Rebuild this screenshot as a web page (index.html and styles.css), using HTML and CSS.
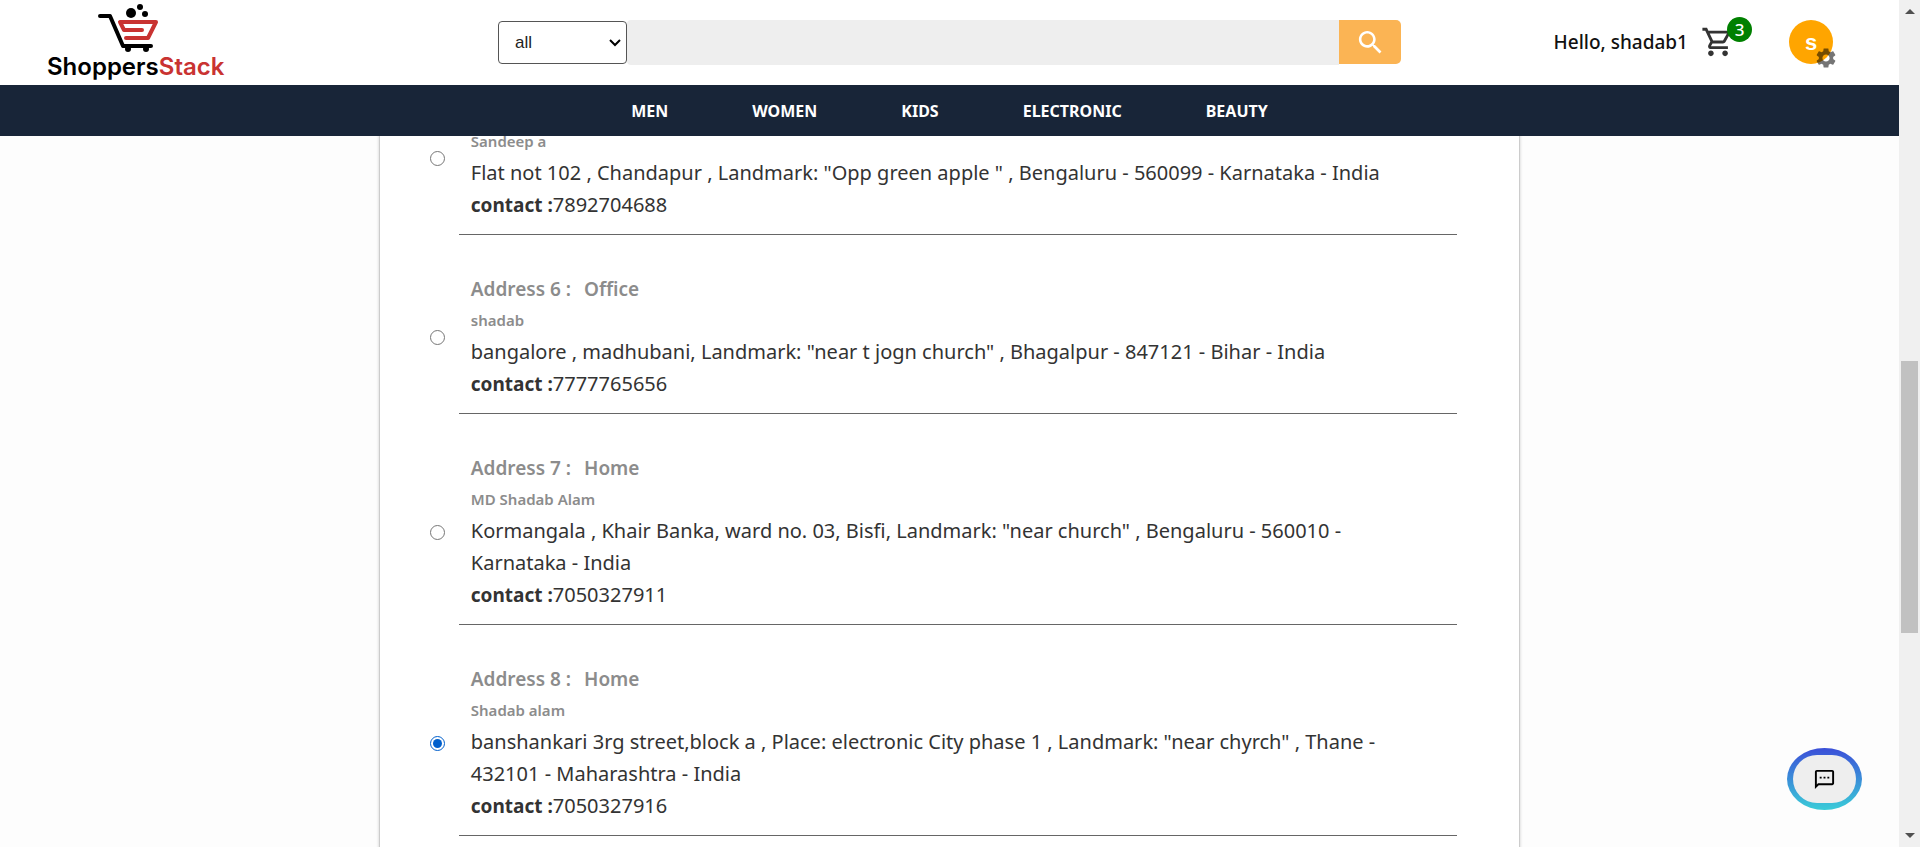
FILE: index.html
```html
<!DOCTYPE html>
<html lang="en">
<head>
<meta charset="utf-8">
<title>ShoppersStack</title>
<link rel="stylesheet" href="styles.css">
</head>
<body>
<div class="page">
  <header class="topbar">
    <a class="brand" href="#">
      <svg class="brand-mark" viewBox="0 0 62 50" width="62" height="50" aria-hidden="true">
        <g fill="none" stroke-linecap="round" stroke-linejoin="round">
          <path d="M3 13H13L26 43H54" stroke="#000" stroke-width="4"/>
          <path d="M45 27H27L23 19H59L51 35H29" stroke="#c93331" stroke-width="4"/>
        </g>
        <circle cx="34" cy="10" r="5"/><circle cx="43" cy="4" r="3"/><circle cx="48" cy="11" r="3"/>
        <circle cx="31" cy="46" r="3"/><circle cx="49" cy="46" r="3"/>
      </svg>
      <span class="brand-name">Shoppers<span class="brand-accent">Stack</span></span>
    </a>
    <form class="search">
      <select class="search-scope" aria-label="Category"><option>all</option></select>
      <input class="search-field" type="text" aria-label="Search products">
      <button class="search-button" type="button" aria-label="Search">
        <svg viewBox="0 0 24 24" width="31" height="31"><path fill="#fff" d="M15.5 14h-.79l-.28-.27C15.41 12.59 16 11.11 16 9.5 16 5.91 13.09 3 9.5 3S3 5.91 3 9.5 5.91 16 9.5 16c1.61 0 3.09-.59 4.23-1.57l.27.28v.79l5 4.99L20.49 19l-4.99-5zm-6 0C7.01 14 5 11.99 5 9.5S7.01 5 9.5 5 14 7.01 14 9.5 11.99 14 9.5 14z"/></svg>
      </button>
    </form>
    <div class="account">
      <span class="greeting">Hello, shadab1</span>
      <a class="cart" href="#" aria-label="Cart">
        <svg viewBox="0 0 24 24" width="34" height="34"><path fill="#333" d="M15.55 13c.75 0 1.41-.41 1.75-1.03l3.58-6.49c.37-.66-.11-1.48-.87-1.48H5.21l-.94-2H1v2h2l3.6 7.59-1.35 2.44C4.52 15.37 5.48 17 7 17h12v-2H7l1.1-2h7.45zM6.16 6h12.15l-2.76 5H8.53L6.16 6zM7 18c-1.1 0-1.99.9-1.99 2S5.9 22 7 22s2-.9 2-2-.9-2-2-2zm10 0c-1.1 0-1.99.9-1.99 2s.89 2 1.99 2 2-.9 2-2-.9-2-2-2z"/></svg>
        <span class="cart-count">3</span>
      </a>
      <button class="avatar" type="button" aria-label="Account settings">s
        <svg class="avatar-gear" viewBox="0 0 24 24" width="24" height="24"><path fill="#000" fill-opacity=".54" d="M19.14 12.94c.04-.3.06-.61.06-.94 0-.32-.02-.64-.07-.94l2.03-1.58c.18-.14.23-.41.12-.61l-1.92-3.32c-.12-.22-.37-.29-.59-.22l-2.39.96c-.5-.38-1.03-.7-1.62-.94l-.36-2.54c-.04-.24-.24-.41-.48-.41h-3.84c-.24 0-.43.17-.47.41l-.36 2.54c-.59.24-1.13.57-1.62.94l-2.39-.96c-.22-.08-.47 0-.59.22L2.74 8.87c-.12.21-.08.47.12.61l2.03 1.58c-.05.3-.09.63-.09.94s.02.64.07.94l-2.03 1.58c-.18.14-.23.41-.12.61l1.92 3.32c.12.22.37.29.59.22l2.39-.96c.5.38 1.03.7 1.62.94l.36 2.54c.05.24.24.41.48.41h3.84c.24 0 .44-.17.47-.41l.36-2.54c.59-.24 1.13-.56 1.62-.94l2.39.96c.22.08.47 0 .59-.22l1.92-3.32c.12-.22.07-.47-.12-.61l-2.01-1.58zM12 15.6c-1.98 0-3.6-1.62-3.6-3.6s1.62-3.6 3.6-3.6 3.6 1.62 3.6 3.6-1.62 3.6-3.6 3.6z"/></svg>
      </button>
    </div>
  </header>
  <nav class="menu">
    <a href="#">MEN</a><a href="#">WOMEN</a><a href="#">KIDS</a><a href="#">ELECTRONIC</a><a href="#">BEAUTY</a>
  </nav>
  <main class="content">
    <div class="card">
      <label class="address address-scrolled">
        <input class="pick" type="radio" name="address">
        <span class="details">
          <span class="person">Sandeep a</span>
          <span class="line">Flat not 102 , Chandapur , Landmark: "Opp green apple " , Bengaluru - 560099 - Karnataka - India</span>
          <span class="line"><b>contact :</b>7892704688</span>
        </span>
      </label>
      <label class="address">
        <input class="pick" type="radio" name="address">
        <span class="details">
          <span class="title">Address 6 : <span class="kind">Office</span></span>
          <span class="person">shadab</span>
          <span class="line">bangalore , madhubani, Landmark: "near t jogn church" , Bhagalpur - 847121 - Bihar - India</span>
          <span class="line"><b>contact :</b>7777765656</span>
        </span>
      </label>
      <label class="address">
        <input class="pick" type="radio" name="address">
        <span class="details">
          <span class="title">Address 7 : <span class="kind">Home</span></span>
          <span class="person">MD Shadab Alam</span>
          <span class="line">Kormangala , Khair Banka, ward no. 03, Bisfi, Landmark: "near church" , Bengaluru - 560010 - Karnataka - India</span>
          <span class="line"><b>contact :</b>7050327911</span>
        </span>
      </label>
      <label class="address">
        <input class="pick" type="radio" name="address" checked>
        <span class="details">
          <span class="title">Address 8 : <span class="kind">Home</span></span>
          <span class="person">Shadab alam</span>
          <span class="line">banshankari 3rg street,block a , Place: electronic City phase 1 , Landmark: "near chyrch" , Thane - 432101 - Maharashtra - India</span>
          <span class="line"><b>contact :</b>7050327916</span>
        </span>
      </label>
    </div>
  </main>
  <button class="chat" type="button" aria-label="Open chat">
    <span class="chat-face">
      <svg viewBox="0 0 24 24" width="23" height="23"><path d="M20 2H4c-1.1 0-1.99.9-1.99 2L2 22l4-4h14c1.1 0 2-.9 2-2V4c0-1.1-.9-2-2-2zm0 14H5.2L4 17.2V4h16v12zM7 9h2v2H7zm4 0h2v2h-2zm4 0h2v2h-2z"/></svg>
    </span>
  </button>
</div>
<div class="scrollbar" aria-hidden="true">
  <span class="arrow arrow-up"></span>
  <span class="track"><span class="thumb"></span></span>
  <span class="arrow arrow-down"></span>
</div>
</body>
</html>
```
FILE: styles.css
```css
* { box-sizing: border-box; }
body {
  margin: 0;
  display: flex;
  height: 100vh;
  overflow: hidden;
  background: #fdfdfd;
  color: #333;
  font-family: "Noto Sans", "Open Sans", sans-serif;
}
a { color: inherit; text-decoration: none; }
button { border: 0; padding: 0; font: inherit; cursor: pointer; }
.page { position: relative; flex: 1; min-width: 0; display: flex; flex-direction: column; }

.topbar {
  display: grid;
  grid-template-columns: 498fr 903fr 498fr;
  flex: none;
  height: 85px;
  background: #fff;
}
.brand {
  display: flex;
  flex-direction: column;
  align-items: flex-start;
  padding: 3px 0 0 47px;
  color: #000;
}
.brand-mark { margin-left: 50px; }
.brand-name { font: 600 24px/27px Inter, sans-serif; }
.brand-accent { color: #c93331; }

.search { display: flex; align-items: flex-start; padding-top: 20px; }
.search-scope {
  width: 129px;
  height: 43px;
  margin: 1px 0;
  padding: 0 0 0 16px;
  border: 1px solid #555;
  border-radius: 4px;
  appearance: none;
  background: #fff url("data:image/svg+xml,%3Csvg xmlns='http://www.w3.org/2000/svg' width='12' height='8'%3E%3Cpath d='M1 1l5 5 5-5' fill='none' stroke='%23000' stroke-width='2'/%3E%3C/svg%3E") no-repeat right 5px center;
  color: #222;
  font: 17px "Liberation Sans", sans-serif;
}
.search-field {
  flex: 1;
  min-width: 0;
  height: 45px;
  border: 0;
  border-radius: 4px 0 0 4px;
  background: #eee;
}
.search-button {
  display: flex;
  align-items: center;
  justify-content: center;
  width: 62px;
  height: 44px;
  border-radius: 0 5px 5px 0;
  background: #fbb454;
}

.account {
  display: flex;
  justify-content: flex-end;
  align-items: center;
  padding: 0 66px 1px 0;
}
.greeting { color: #111; font: 500 19px/24px "Noto Sans", sans-serif; }
.cart { position: relative; display: flex; margin: 0 54px 0 13px; }
.cart-count {
  position: absolute;
  top: -8px;
  right: -17px;
  width: 25px;
  height: 25px;
  border-radius: 50%;
  background: #008000;
  color: #fff;
  font: 500 17px/25px "Noto Sans", sans-serif;
  text-align: center;
}
.avatar {
  position: relative;
  width: 44px;
  height: 44px;
  border-radius: 50%;
  background: #ffa500;
  color: #fff;
  font: bold 22px/46px "Liberation Sans", sans-serif;
}
.avatar-gear { position: absolute; right: -5px; bottom: -6px; }

.menu {
  display: flex;
  flex: none;
  justify-content: center;
  align-items: center;
  gap: 84px;
  height: 51px;
  padding-top: 1px;
  background: #182538;
  color: #fff;
  font: 700 16px/20px "Noto Sans", sans-serif;
}

.content { flex: 1; min-height: 0; overflow: hidden; }
.card {
  width: calc(60% + 2px);
  margin: -11px auto 0;
  padding: 0 62px 100px 50px;
  border: 1px solid #ccc;
  background: #fff;
  box-shadow: 0 0 3px #ccc;
}
.address { display: flex; align-items: center; }
.pick { flex: none; width: 15px; height: 15px; margin: 25px 14px 0 0; accent-color: #005fcc; }
.details {
  display: flex;
  flex: 1;
  flex-direction: column;
  padding: 38px 24px 13px 12px;
  border-bottom: 1px solid #666;
  font-size: 20px;
  line-height: 32px;
}
.details b { font-size: 19px; }
.title, .person { color: #8c8c8c; font-weight: 600; }
.title { font-size: 19px; }
.kind { margin-left: 8px; }
.person { font-size: 15px; line-height: 31px; }
.address-scrolled { align-items: flex-start; }
.address-scrolled .details { padding-top: 0; }

.chat {
  position: absolute;
  right: 37px;
  bottom: 37px;
  display: flex;
  width: 75px;
  height: 62px;
  padding: 7px 6px;
  border-radius: 50%;
  background: linear-gradient(#3b4fd8, #3accd8);
}
.chat-face {
  display: flex;
  flex: 1;
  align-items: center;
  justify-content: center;
  border-radius: 24px;
  background: #eee;
}

.scrollbar {
  display: flex;
  flex: none;
  flex-direction: column;
  align-items: center;
  justify-content: space-between;
  width: 21px;
  padding: 9px 0;
  background: #f0f0f0;
}
.arrow { border: 5px solid transparent; }
.arrow-up { border-top: 0; border-bottom-color: #505050; }
.arrow-down { border-bottom: 0; border-top-color: #505050; }
.track { flex: 1; display: flex; flex-direction: column; justify-content: center; width: 17px; padding-top: 147px; }
.thumb { height: 272px; background: #c1c1c1; }
```
